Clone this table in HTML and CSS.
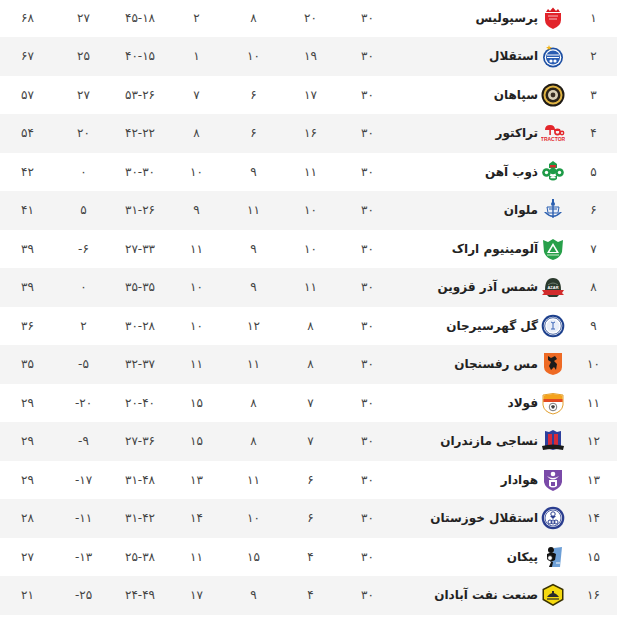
FILE: index.html
```html
<!DOCTYPE html>
<html lang="fa" dir="rtl">
<head>
<meta charset="utf-8">
<link rel="stylesheet" href="styles.css">
</head>
<body>
<div class="table">
  <div class="row"><div class="rank">۱</div><div class="team"><svg class="logo" viewBox="0 0 24 24"><path d="M5 6 L7 3 L9 5 L12 1.5 L15 5 L17 3 L19 6 Z" fill="#d71920"/><path d="M4 7 H20 V14 Q20 20 12 23 Q4 20 4 14 Z" fill="#e2232a"/><path d="M7 10 H17 M8 13 H16" stroke="#fff" stroke-width="1" opacity=".7"/></svg><span class="name">پرسپولیس</span></div><div class="n">۳۰</div><div class="n">۲۰</div><div class="n">۸</div><div class="n">۲</div><div class="n">۴۵-۱۸</div><div class="n">۲۷</div><div class="n">۶۸</div></div>
  <div class="row"><div class="rank">۲</div><div class="team"><svg class="logo" viewBox="0 0 24 24"><circle cx="12" cy="13.5" r="10" fill="#1d4fa3"/><circle cx="12" cy="13.5" r="8.3" fill="#fff"/><circle cx="12" cy="13.5" r="7" fill="#2a5db3"/><path d="M6 11 H18 M6 13.5 H18" stroke="#fff" stroke-width="1"/><circle cx="10" cy="17" r="1.6" fill="#fff"/><circle cx="14" cy="17" r="1.6" fill="#fff"/><path d="M8 1 L8.8 3 L11 3 L9.2 4.2 L9.9 6.2 L8 5 L6.1 6.2 L6.8 4.2 L5 3 L7.2 3 Z" fill="#f0b41c"/></svg><span class="name">استقلال</span></div><div class="n">۳۰</div><div class="n">۱۹</div><div class="n">۱۰</div><div class="n">۱</div><div class="n">۴۰-۱۵</div><div class="n">۲۵</div><div class="n">۶۷</div></div>
  <div class="row"><div class="rank">۳</div><div class="team"><svg class="logo" viewBox="0 0 24 24"><circle cx="12" cy="12" r="11.5" fill="#1f1a14"/><circle cx="12" cy="12" r="9.5" fill="#e0b443"/><circle cx="12" cy="12" r="7.5" fill="#2a2218"/><circle cx="12" cy="12" r="5" fill="#d9d0b8"/><circle cx="12" cy="12" r="2.4" fill="#3a3025"/></svg><span class="name">سپاهان</span></div><div class="n">۳۰</div><div class="n">۱۷</div><div class="n">۶</div><div class="n">۷</div><div class="n">۵۳-۲۶</div><div class="n">۲۷</div><div class="n">۵۷</div></div>
  <div class="row"><div class="rank">۴</div><div class="team"><svg class="logo" viewBox="0 0 24 24"><path d="M4 9 Q4 4 9 4 Q14 4 14 9 Z" fill="#e3262b"/><rect x="8.3" y="8" width="1.6" height="6" fill="#e3262b"/><circle cx="16.5" cy="11" r="2.6" fill="none" stroke="#e3262b" stroke-width="1.6"/><circle cx="21" cy="12" r="1.7" fill="none" stroke="#e3262b" stroke-width="1.4"/><rect x="13" y="8" width="6" height="2" fill="#e3262b"/><text x="12" y="20" font-size="5" text-anchor="middle" fill="#e3262b" font-family="Liberation Sans, sans-serif" font-weight="bold">TRACTOR</text></svg><span class="name">تراکتور</span></div><div class="n">۳۰</div><div class="n">۱۶</div><div class="n">۶</div><div class="n">۸</div><div class="n">۴۲-۲۲</div><div class="n">۲۰</div><div class="n">۵۴</div></div>
  <div class="row"><div class="rank">۵</div><div class="team"><svg class="logo" viewBox="0 0 24 24"><path d="M8 4 L12 1 L16 4 L16 8 L8 8 Z" fill="#1e9b47"/><path d="M9 5 H15 V7.5 H9 Z" fill="#d42d2d"/><circle cx="5.5" cy="12.5" r="4.3" fill="#1e9b47"/><circle cx="18.5" cy="12.5" r="4.3" fill="#1e9b47"/><circle cx="12" cy="11" r="3.2" fill="#1e9b47"/><circle cx="5.5" cy="12.5" r="1.7" fill="#fff"/><circle cx="18.5" cy="12.5" r="1.7" fill="#fff"/><path d="M8 15 Q12 19 16 15 L16 19 Q12 22 8 19 Z" fill="#1e9b47"/><rect x="9.5" y="17" width="5" height="1.3" fill="#fff"/></svg><span class="name">ذوب آهن</span></div><div class="n">۳۰</div><div class="n">۱۱</div><div class="n">۹</div><div class="n">۱۰</div><div class="n">۳۰-۳۰</div><div class="n">۰</div><div class="n">۴۲</div></div>
  <div class="row"><div class="rank">۶</div><div class="team"><svg class="logo" viewBox="0 0 24 24"><path d="M11 1 H13 V5 H11 Z" fill="#2b5fb0"/><circle cx="12" cy="6" r="2" fill="#2b5fb0"/><path d="M6 9 H18 L17 15 H7 Z" fill="#e8eef8" stroke="#2b5fb0" stroke-width="1"/><path d="M3 14 Q12 24 21 14 L19 14 Q12 21 5 14 Z" fill="#2b5fb0"/><path d="M11.3 8 H12.7 V20 H11.3 Z" fill="#2b5fb0"/><path d="M8 11 H16" stroke="#2b5fb0" stroke-width="1"/></svg><span class="name">ملوان</span></div><div class="n">۳۰</div><div class="n">۱۰</div><div class="n">۱۱</div><div class="n">۹</div><div class="n">۳۱-۲۶</div><div class="n">۵</div><div class="n">۴۱</div></div>
  <div class="row"><div class="rank">۷</div><div class="team"><svg class="logo" viewBox="0 0 24 24"><path d="M2 3 L7 5 L12 2 L17 5 L22 3 L21 15 Q19 21 12 23 Q5 21 3 15 Z" fill="#27a04a"/><path d="M12 6 L18 16 H6 Z" fill="#fff"/><path d="M12 9 L15.5 15 H8.5 Z" fill="#27a04a"/><path d="M6 18 H18" stroke="#9ed7a5" stroke-width="1.4"/></svg><span class="name">آلومینیوم اراک</span></div><div class="n">۳۰</div><div class="n">۱۰</div><div class="n">۹</div><div class="n">۱۱</div><div class="n">۲۷-۳۳</div><div class="n">-۶</div><div class="n">۳۹</div></div>
  <div class="row"><div class="rank">۸</div><div class="team"><svg class="logo" viewBox="0 0 24 24"><path d="M4 15 Q4 3 12 3 Q20 3 20 15 Z" fill="#2b3a2e"/><path d="M7 10 Q12 6 17 10" stroke="#6d7d6f" stroke-width="1" fill="none"/><text x="12" y="14" font-size="4" text-anchor="middle" fill="#fff" font-family="Liberation Sans, sans-serif" font-weight="bold">AZAR</text><path d="M1 15 H23 L21 18 L23 20 H1 L3 18 Z" fill="#d12b2b"/><path d="M6 20 H18 L16 22 H8 Z" fill="#2b3a2e"/></svg><span class="name">شمس آذر قزوین</span></div><div class="n">۳۰</div><div class="n">۱۱</div><div class="n">۹</div><div class="n">۱۰</div><div class="n">۳۵-۳۵</div><div class="n">۰</div><div class="n">۳۹</div></div>
  <div class="row"><div class="rank">۹</div><div class="team"><svg class="logo" viewBox="0 0 24 24"><circle cx="12" cy="12" r="11.3" fill="#1c3f8c"/><circle cx="12" cy="12" r="9.3" fill="#fff"/><circle cx="12" cy="12" r="8.3" fill="none" stroke="#1c3f8c" stroke-width=".8"/><circle cx="12" cy="12" r="6.5" fill="#e9eef8"/><path d="M10 8 Q12 10 14 8 M12 9 V15 M10 15 H14" stroke="#3c66b8" stroke-width="1" fill="none"/></svg><span class="name">گل گهرسیرجان</span></div><div class="n">۳۰</div><div class="n">۸</div><div class="n">۱۲</div><div class="n">۱۰</div><div class="n">۳۰-۲۸</div><div class="n">۲</div><div class="n">۳۶</div></div>
  <div class="row"><div class="rank">۱۰</div><div class="team"><svg class="logo" viewBox="0 0 24 24"><path d="M3 1 H21 V15 Q21 21 12 23 Q3 21 3 15 Z" fill="#ee6a24"/><path d="M7 4 L10 6 L14 4 L16 7 L13 9 L16 12 L15 18 L13 15 L10 18 L8 14 L10 10 L7 8 Z" fill="#1b1b1b"/></svg><span class="name">مس رفسنجان</span></div><div class="n">۳۰</div><div class="n">۸</div><div class="n">۱۱</div><div class="n">۱۱</div><div class="n">۳۲-۳۷</div><div class="n">-۵</div><div class="n">۳۵</div></div>
  <div class="row"><div class="rank">۱۱</div><div class="team"><svg class="logo" viewBox="0 0 24 24"><path d="M2 4 Q12 1 22 4 V14 Q21 21 12 23 Q3 21 2 14 Z" fill="#fff" stroke="#e2a030" stroke-width="1"/><path d="M2.5 4.5 Q12 1.5 21.5 4.5 V11 H2.5 Z" fill="#f4a21c"/><path d="M2.5 8 H21.5 V11 H2.5 Z" fill="#e24a22"/><circle cx="12" cy="16" r="3.8" fill="#fff" stroke="#555" stroke-width=".8"/><path d="M10 15 L12 14 L14 15 L13 17.5 H11 Z" fill="#444"/></svg><span class="name">فولاد</span></div><div class="n">۳۰</div><div class="n">۷</div><div class="n">۸</div><div class="n">۱۵</div><div class="n">۲۰-۴۰</div><div class="n">-۲۰</div><div class="n">۲۹</div></div>
  <div class="row"><div class="rank">۱۲</div><div class="team"><svg class="logo" viewBox="0 0 24 24"><path d="M4 2 L8 3 L12 1 L16 3 L20 2 V17 Q16 20 12 21 Q8 20 4 17 Z" fill="#2d3f9c"/><path d="M7 5 H11 V16 H7 Z" fill="#d62b3a"/><path d="M13 5 H17 V16 H13 Z" fill="#d62b3a"/><path d="M1 17 Q12 14 23 17 L22 21 Q12 19 2 21 Z" fill="#1b1b1b"/></svg><span class="name">نساجی مازندران</span></div><div class="n">۳۰</div><div class="n">۷</div><div class="n">۸</div><div class="n">۱۵</div><div class="n">۲۷-۳۶</div><div class="n">-۹</div><div class="n">۲۹</div></div>
  <div class="row"><div class="rank">۱۳</div><div class="team"><svg class="logo" viewBox="0 0 24 24"><path d="M3 2 H21 V14 Q20 20 12 23 Q4 20 3 14 Z" fill="#7a4aa8"/><circle cx="12" cy="6" r="2.3" fill="#fff"/><path d="M6 8 Q12 12 18 8 L16 10 Q12 13 8 10 Z" fill="#fff"/><path d="M8 12 H16 V18 Q12 21 8 18 Z" fill="#fff"/><path d="M10 14 H14 V18 H10 Z" fill="#7a4aa8"/></svg><span class="name">هوادار</span></div><div class="n">۳۰</div><div class="n">۶</div><div class="n">۱۱</div><div class="n">۱۳</div><div class="n">۳۱-۴۸</div><div class="n">-۱۷</div><div class="n">۲۹</div></div>
  <div class="row"><div class="rank">۱۴</div><div class="team"><svg class="logo" viewBox="0 0 24 24"><circle cx="12" cy="12" r="11.3" fill="#2a3d8f"/><circle cx="12" cy="12" r="9" fill="#fff"/><circle cx="12" cy="12" r="8" fill="none" stroke="#2a3d8f" stroke-width=".8"/><circle cx="12" cy="8" r="2.2" fill="none" stroke="#2a3d8f" stroke-width="1"/><path d="M9 10 L15 10 L12 13 Z" fill="#2a3d8f"/><circle cx="9" cy="16" r="2" fill="none" stroke="#2a3d8f" stroke-width="1"/><circle cx="12" cy="16" r="2" fill="none" stroke="#2a3d8f" stroke-width="1"/><circle cx="15" cy="16" r="2" fill="none" stroke="#2a3d8f" stroke-width="1"/></svg><span class="name">استقلال خوزستان</span></div><div class="n">۳۰</div><div class="n">۶</div><div class="n">۱۰</div><div class="n">۱۴</div><div class="n">۳۱-۴۲</div><div class="n">-۱۱</div><div class="n">۲۸</div></div>
  <div class="row"><div class="rank">۱۵</div><div class="team"><svg class="logo" viewBox="0 0 24 24"><path d="M13 3 L21 2 L19 22 L10 22 Z" fill="#6d9fd6"/><circle cx="10" cy="5" r="3" fill="#111"/><path d="M6 9 Q11 6 15 9 L14 15 L10 17 L6 14 Z" fill="#111"/><circle cx="9" cy="13" r="2.4" fill="#fff" stroke="#111" stroke-width=".8"/><path d="M10 17 L8 22 H11 L12 17 Z" fill="#111"/><path d="M15 18 H19" stroke="#fff" stroke-width="1"/></svg><span class="name">پیکان</span></div><div class="n">۳۰</div><div class="n">۴</div><div class="n">۱۵</div><div class="n">۱۱</div><div class="n">۲۵-۳۸</div><div class="n">-۱۳</div><div class="n">۲۷</div></div>
  <div class="row"><div class="rank">۱۶</div><div class="team"><svg class="logo" viewBox="0 0 24 24"><path d="M12 0.8 L22.5 6 V17 L12 23 L1.5 17 V6 Z" fill="#3a3200"/><path d="M12 2.5 L21 7 V16 L12 21.3 L3 16 V7 Z" fill="#f5d90f"/><path d="M6 14 Q12 6 18 14 Z" fill="#2b2b2b"/><path d="M11 8 H13 V14 H11 Z" fill="#2b2b2b"/><path d="M6 16 H18" stroke="#2b2b2b" stroke-width="1.2"/></svg><span class="name">صنعت نفت آبادان</span></div><div class="n">۳۰</div><div class="n">۴</div><div class="n">۹</div><div class="n">۱۷</div><div class="n">۲۴-۴۹</div><div class="n">-۲۵</div><div class="n">۲۱</div></div>
  <div class="row"></div>
</div>
</body>
</html>
```

FILE: styles.css
```css
html, body {
  margin: 0;
  padding: 0;
  background: #ffffff;
}
body {
  width: 617px;
  height: 625px;
  overflow: hidden;
  font-family: "DejaVu Sans", "Noto Sans", sans-serif;
  color: #333;
}
.table {
  margin-top: -1.5px;
  display: flex;
  flex-direction: column;
}
.row {
  height: 38.5px;
  display: grid;
  grid-template-columns: 47px 174px 57px 57px 57px 57px 56px 57px 55px;
  align-items: center;
  background: #ffffff;
}
.row:nth-child(even) {
  background: #f4f4f4;
}
.rank {
  text-align: center;
  font-size: 12px;
  color: #444;
}
.team {
  display: flex;
  align-items: center;
  gap: 3px;
  padding-right: 5px;
}
.logo {
  width: 24px;
  height: 24px;
  flex: none;
}
.name {
  font-size: 12px;
  font-weight: bold;
  color: #222;
  white-space: nowrap;
}
.n {
  text-align: center;
  font-size: 12px;
  color: #444;
  direction: ltr;
}
```
